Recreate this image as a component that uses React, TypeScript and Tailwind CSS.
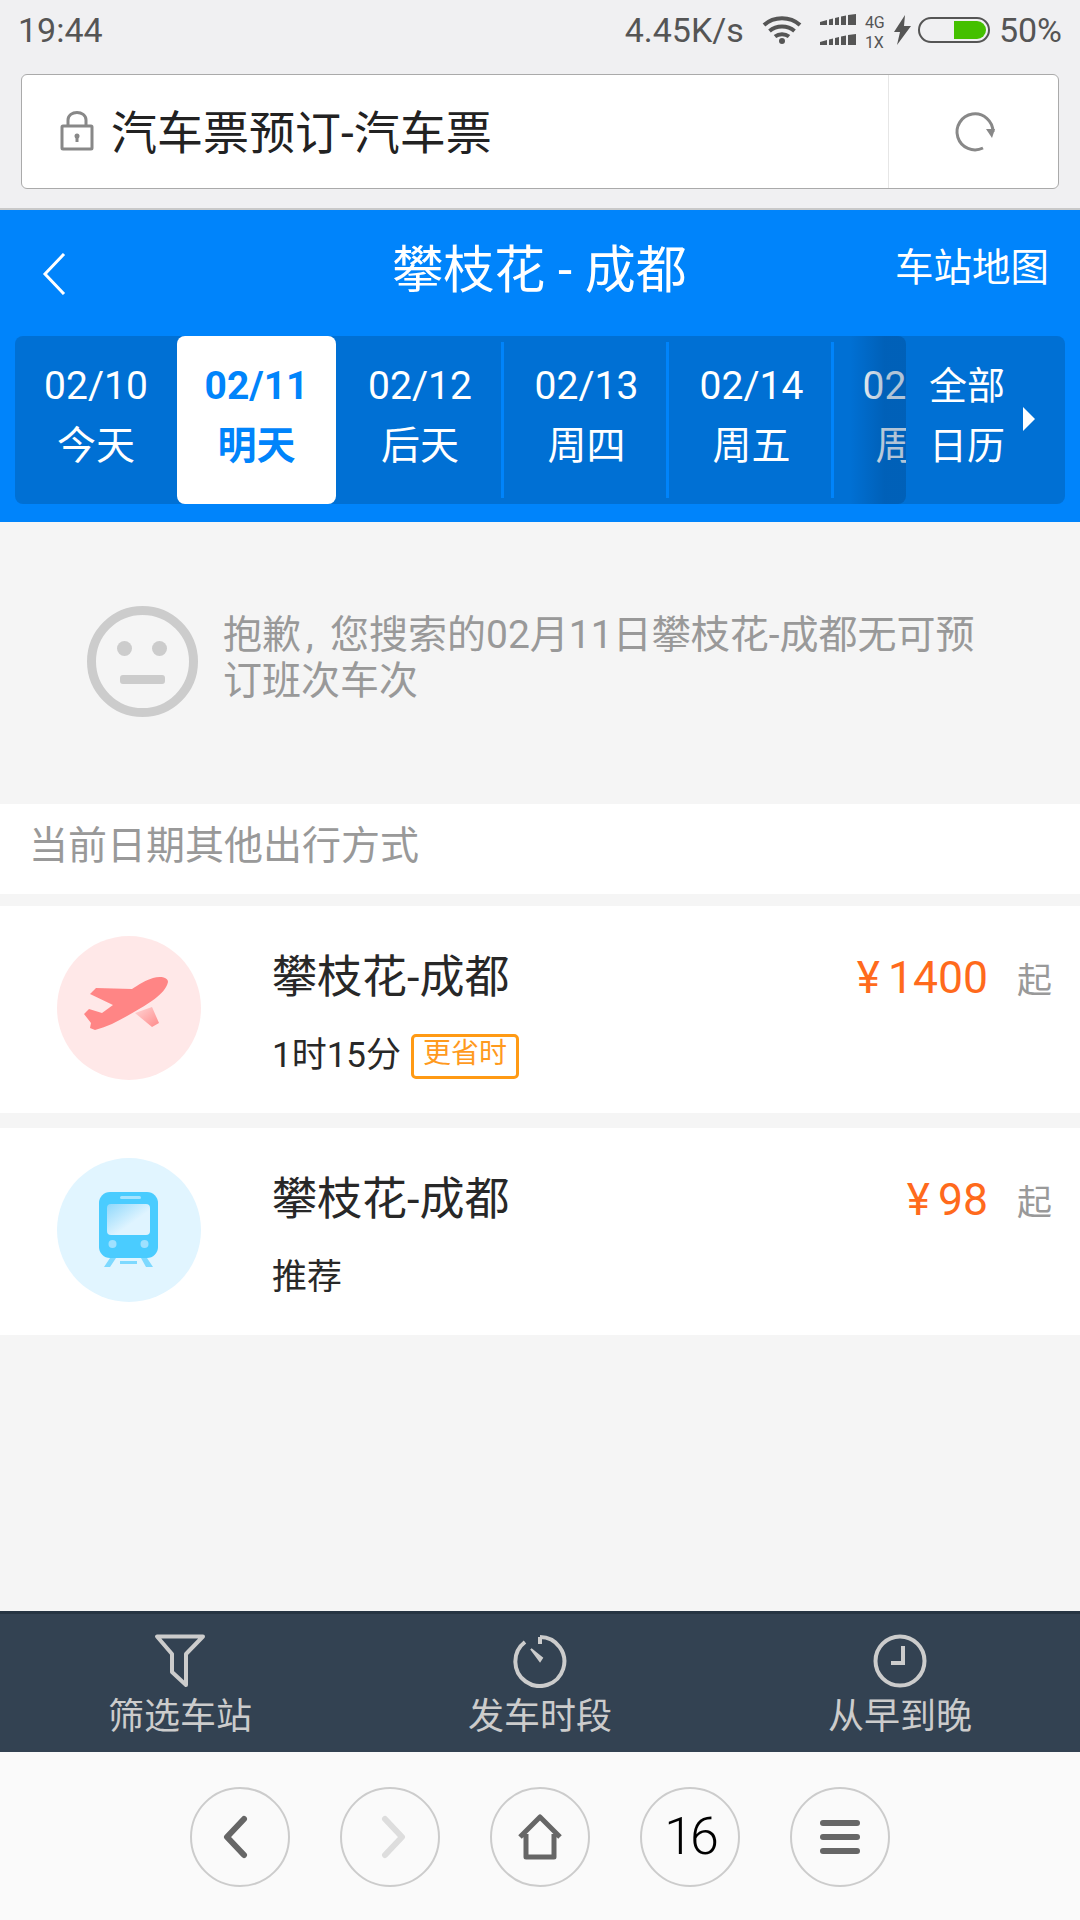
const font = "[font-family:Roboto,'Noto_Sans_CJK_SC',sans-serif]";

const tabs = [
  { w: "w-[162px]", d: "02/10", l: "今天" },
  { w: "w-[159px]", d: "02/11", l: "明天", active: true },
  { w: "w-[168px]", d: "02/12", l: "后天", sep: true },
  { w: "w-[165px]", d: "02/13", l: "周四", sep: true },
  { w: "w-[165px]", d: "02/14", l: "周五", sep: true },
  { w: "w-[161px]", d: "02/15", l: "周六" },
];

function StatusBar() {
  return (
    <div className="flex h-[74px] shrink-0 items-start justify-between px-[18px] pt-[10px] text-[#555] text-[34px] leading-[40px]">
      <span>19:44</span>
      <div className="flex items-start">
        <span>4.45K/s</span>
        <svg className="ml-[18px] mt-[5px]" width="40" height="29" viewBox="0 0 40 29" fill="none" stroke="#555" strokeWidth="4">
          <path d="M2 10C12 1 28 1 38 10" />
          <path d="M7.5 16C14.5 10 25.5 10 32.5 16" />
          <path d="M13 21.5C17 18.5 23 18.5 27 21.5" />
          <circle cx="20" cy="26" r="3" fill="#555" stroke="none" />
        </svg>
        <svg className="ml-[17px] mt-[4px]" width="40" height="34" viewBox="0 0 40 34" fill="#555">
          <path d="M1 8l7-2v5H1zM10 5.500l4-1V11h-4zM16 4l4-1v8h-4zM22 2.500l5-1V11h-5zM29 1l8-1v11h-8z" />
          <path d="M1 28l7-2v5H1zM10 25.500l4-1V31h-4zM16 24l4-1v8h-4zM22 22.500l5-1V31h-5zM29 21l8-1v11h-8z" />
        </svg>
        <div className="ml-[6px] mt-[3px] flex w-[24px] flex-col text-[16px] leading-[20px]">
          <span>4G</span>
          <span>1X</span>
        </div>
        <svg className="ml-[5px] mt-[5px]" width="18" height="30" viewBox="0 0 18 30" fill="#555">
          <path d="M11 0L0 17h6L3 30 17 11h-7z" />
        </svg>
        <div className="ml-[6px] mt-[7px] flex h-[26px] w-[72px] justify-end rounded-[13px] border-2 border-[#555] p-[2px]">
          <div className="h-[18px] w-[32px] rounded-r-[9px] bg-[#44c000]" />
        </div>
        <span className="ml-[9px]">50%</span>
      </div>
    </div>
  );
}

function UrlBar() {
  return (
    <div className="h-[136px] shrink-0 border-b-2 border-[#c9c9c9] px-[21px]">
      <div className="flex h-[115px] items-stretch rounded-[6px] border border-[#aaa] bg-white">
        <div className="flex flex-1 items-center pl-[38px]">
          <svg className="mb-[4px]" width="34" height="42" viewBox="0 0 34 42" fill="none" stroke="#888" strokeWidth="3">
            <path d="M8 17V11C8 1 26 1 26 11V17" />
            <rect x="2" y="17" width="30" height="23" rx="1" />
            <circle cx="17" cy="27" r="2.500" fill="#888" stroke="none" />
            <path d="M17 27v6" />
          </svg>
          <span className="ml-[17px] mt-[3px] text-[46px] leading-[56px] text-[#222]">汽车票预订-汽车票</span>
        </div>
        <div className="flex w-[170px] items-center justify-center border-l border-[#e6e6e6]">
          <svg className="ml-[2px]" width="44" height="44" viewBox="0 0 44 44" fill="none">
            <path d="M30 38A18 18 0 1 1 40 22" stroke="#888" strokeWidth="3" />
            <path d="M33 19h9l-3 9z" fill="#888" />
          </svg>
        </div>
      </div>
    </div>
  );
}

function DateStrip() {
  return (
    <div className="mx-[15px] flex h-[168px] rounded-[8px] bg-[#0070d4]">
      <div className="relative flex w-[891px] shrink-0 overflow-hidden">
        {tabs.map((t) => (
          <div key={t.d} className={`flex shrink-0 ${t.w} flex-col items-center pt-[20px] text-[39px] leading-[60px] ${t.active ? "rounded-[8px] bg-white font-bold text-[#0084fb]" : "text-white"} ${t.sep ? "relative" : ""}`}>
            <span>{t.d}</span>
            <span>{t.l}</span>
            {t.sep && <div className="absolute right-0 top-[6px] h-[156px] w-[3px] bg-[#0084fb]" />}
          </div>
        ))}
        <div className="absolute right-0 top-0 h-full w-[56px] rounded-r-[8px] bg-[linear-gradient(to_right,rgba(0,60,120,0),rgba(0,60,120,0.3)_62%)]" />
      </div>
      <div className="flex flex-1 items-center pl-[23px]">
        <div className="mb-[8px] flex flex-col text-[38px] leading-[60px] text-white">
          <span>全部</span>
          <span>日历</span>
        </div>
        <svg className="ml-[18px] mb-[2px]" width="12" height="24" viewBox="0 0 12 24" fill="#fff">
          <path d="M0 0l12 12L0 24z" />
        </svg>
      </div>
    </div>
  );
}

function Header() {
  return (
    <div className="h-[312px] shrink-0 bg-[#0084fb]">
      <div className="flex h-[126px] items-center justify-between pl-[42px] pr-[31px]">
        <svg className="mt-[2px]" width="24" height="42" viewBox="0 0 24 42" fill="none" stroke="#fff" strokeWidth="3">
          <path d="M22 1L3 21l19 20" />
        </svg>
        <span className="ml-[118px] mt-[-4px] text-[51px] leading-[60px] text-white">攀枝花 - 成都</span>
        <span className="mt-[-10px] text-[38.5px] leading-[50px] text-white">车站地图</span>
      </div>
      <DateStrip />
    </div>
  );
}

function Plane() {
  return (
    <svg width="144" height="144" viewBox="57 936 144 144">
      <defs>
        <linearGradient id="wing" x1="0" y1="0" x2="1" y2="1">
          <stop offset="0" stopColor="#ffd5d5" />
          <stop offset="1" stopColor="#ff8a8a" />
        </linearGradient>
      </defs>
      <path d="M135 1013L152 1007L159 1023L152 1027Z" fill="url(#wing)" />
      <path d="M168 982C168 977 160 976 153 978C146 980 138 985 132 989L96 988L90 994L113 1005L102 1013L89 1009L84 1014L91 1023L90 1028L95 1030C110 1026 122 1019 134 1012C146 1005 165 995 168 982Z" fill="#ff8585" />
    </svg>
  );
}

function Train() {
  return (
    <svg width="144" height="144" viewBox="57 1158 144 144">
      <defs>
        <linearGradient id="glass" x1="0" y1="0" x2="1" y2="1">
          <stop offset="0" stopColor="#8fd8fb" />
          <stop offset="0.6" stopColor="#dff4ff" />
        </linearGradient>
      </defs>
      <rect x="99" y="1192" width="59" height="66" rx="11" fill="#4accff" />
      <rect x="120" y="1196" width="21" height="3" rx="1.500" fill="#a5e4ff" />
      <rect x="107" y="1204" width="43" height="31" rx="4" fill="url(#glass)" />
      <circle cx="112.500" cy="1244" r="4" fill="#9fe1ff" />
      <circle cx="144.500" cy="1244" r="4" fill="#9fe1ff" />
      <path d="M110 1258h6l-6 9h-6zM141 1258h6l6 9h-7z" fill="#7dd9ff" />
      <rect x="120" y="1261" width="17" height="3" fill="#7dd9ff" />
    </svg>
  );
}

function Card({ icon, bg, price, children, mt }: { icon: React.ReactNode; bg: string; price: string; children: React.ReactNode; mt: string }) {
  return (
    <div className={`flex h-[207px] items-start bg-white pl-[57px] pr-[28px] ${mt}`}>
      <div className={`mt-[30px] size-[144px] shrink-0 rounded-full ${bg}`}>{icon}</div>
      <div className="ml-[71px] flex-1 pt-[46px]">
        <div className="text-[45px] leading-[52px] text-[#282828]">攀枝花-成都</div>
        <div className="mt-[29px] flex h-[46px] items-center text-[35px] text-[#282828]">{children}</div>
      </div>
      <div className="flex items-baseline pt-[46px]">
        <span className="text-[44px] leading-[52px] text-[#ff6a1c]">¥</span>
        <span className="ml-[8px] text-[44.5px] leading-[52px] text-[#ff6a1c]">{price}</span>
        <span className="ml-[29px] text-[35px] text-[#999]">起</span>
      </div>
    </div>
  );
}

function Content() {
  return (
    <div className="flex-1 bg-[#f5f5f5]">
      <div className="flex h-[282px] items-start pl-[87px] pt-[84px]">
        <div className="relative size-[111px] shrink-0 rounded-full border-[9px] border-[#ccc]">
          <div className="absolute left-[21px] top-[26px] size-[15px] rounded-full bg-[#ccc]" />
          <div className="absolute left-[56px] top-[26px] size-[15px] rounded-full bg-[#ccc]" />
          <div className="absolute left-[24px] top-[60px] h-[9px] w-[45px] rounded-[3px] bg-[#ccc]" />
        </div>
        <p className="ml-[25px] mt-[6px] w-[762px] text-[39px] leading-[46px] text-[#999]">
          抱歉<span className="inline-block w-[29px] pl-[5px]">,</span>您搜索的02月11日攀枝花-成都无可预订班次车次
        </p>
      </div>
      <div className="flex h-[90px] items-center bg-white pb-[6px] pl-[29px] text-[39px] text-[#999]">当前日期其他出行方式</div>
      <Card mt="mt-[12px]" bg="bg-[#ffe8e8]" price="1400" icon={<Plane />}>
        <span>1时15分</span>
        <span className="ml-[10px] flex h-[45px] w-[108px] items-start justify-center rounded-[5px] border-[3px] border-[#ff9a14] text-[28px] leading-[34px] text-[#ff9a1e]">更省时</span>
      </Card>
      <Card mt="mt-[15px]" bg="bg-[#e1f5ff]" price="98" icon={<Train />}>
        <span>推荐</span>
      </Card>
    </div>
  );
}

function ToolItem({ label, children }: { label: string; children: React.ReactNode }) {
  return (
    <div className="flex w-[360px] flex-col items-center pt-[20px]">
      {children}
      <span className="mt-[7px] text-[36px] leading-[44px] text-[#ccc]">{label}</span>
    </div>
  );
}

function Toolbar() {
  return (
    <div className="flex h-[141px] shrink-0 border-t-[3px] border-[#263442] bg-[#334252]">
      <ToolItem label="筛选车站">
        <svg width="52" height="54" viewBox="0 0 52 54" fill="none" stroke="#ccc" strokeWidth="4">
          <path d="M3 2.500H49L32 20V51L18 38V20Z" strokeLinejoin="round" />
        </svg>
      </ToolItem>
      <ToolItem label="发车时段">
        <svg width="54" height="54" viewBox="0 0 54 54" fill="none" stroke="#ccc" strokeWidth="4">
          <path d="M27 3A24.500 24.500 0 1 1 12 8" />
          <path d="M27 3V10" />
          <path d="M18 15L27 27L29 24Z" fill="#ccc" strokeWidth="2" />
        </svg>
      </ToolItem>
      <ToolItem label="从早到晚">
        <svg width="54" height="54" viewBox="0 0 54 54" fill="none" stroke="#ccc" strokeWidth="4">
          <circle cx="27" cy="27" r="24.500" />
          <path d="M30 12V29H18" />
        </svg>
      </ToolItem>
    </div>
  );
}

function NavBtn({ children }: { children: React.ReactNode }) {
  return <div className="flex size-[100px] items-center justify-center rounded-full border-2 border-[#ccc]">{children}</div>;
}

function BottomNav() {
  return (
    <div className="flex h-[168px] shrink-0 items-start justify-center gap-[50px] bg-[#fafafa] pt-[35px]">
      <NavBtn>
        <svg className="mr-[10px]" width="26" height="44" viewBox="0 0 26 44" fill="none" stroke="#666" strokeWidth="6" strokeLinecap="round" strokeLinejoin="round">
          <path d="M22 4L5 22l17 18" />
        </svg>
      </NavBtn>
      <NavBtn>
        <svg className="ml-[8px]" width="26" height="44" viewBox="0 0 26 44" fill="none" stroke="#ddd" strokeWidth="6" strokeLinecap="round" strokeLinejoin="round">
          <path d="M4 4l17 18L4 40" />
        </svg>
      </NavBtn>
      <NavBtn>
        <svg width="46" height="46" viewBox="0 0 46 46" fill="none" stroke="#666" strokeWidth="5" strokeLinejoin="round">
          <path d="M3 23L23 3l20 20M9 20V43H37V20" />
        </svg>
      </NavBtn>
      <NavBtn>
        <span className="text-[52px] font-light leading-none tracking-[-3px] text-black">16</span>
      </NavBtn>
      <NavBtn>
        <div className="flex w-[40px] flex-col gap-[8px]">
          <div className="h-[6px] rounded-full bg-[#666]" />
          <div className="h-[6px] rounded-full bg-[#666]" />
          <div className="h-[6px] rounded-full bg-[#666]" />
        </div>
      </NavBtn>
    </div>
  );
}

export default function App() {
  return (
    <div className={`flex h-[1920px] w-[1080px] flex-col overflow-hidden bg-[#f0f0f2] ${font}`}>
      <StatusBar />
      <UrlBar />
      <Header />
      <Content />
      <Toolbar />
      <BottomNav />
    </div>
  );
}
